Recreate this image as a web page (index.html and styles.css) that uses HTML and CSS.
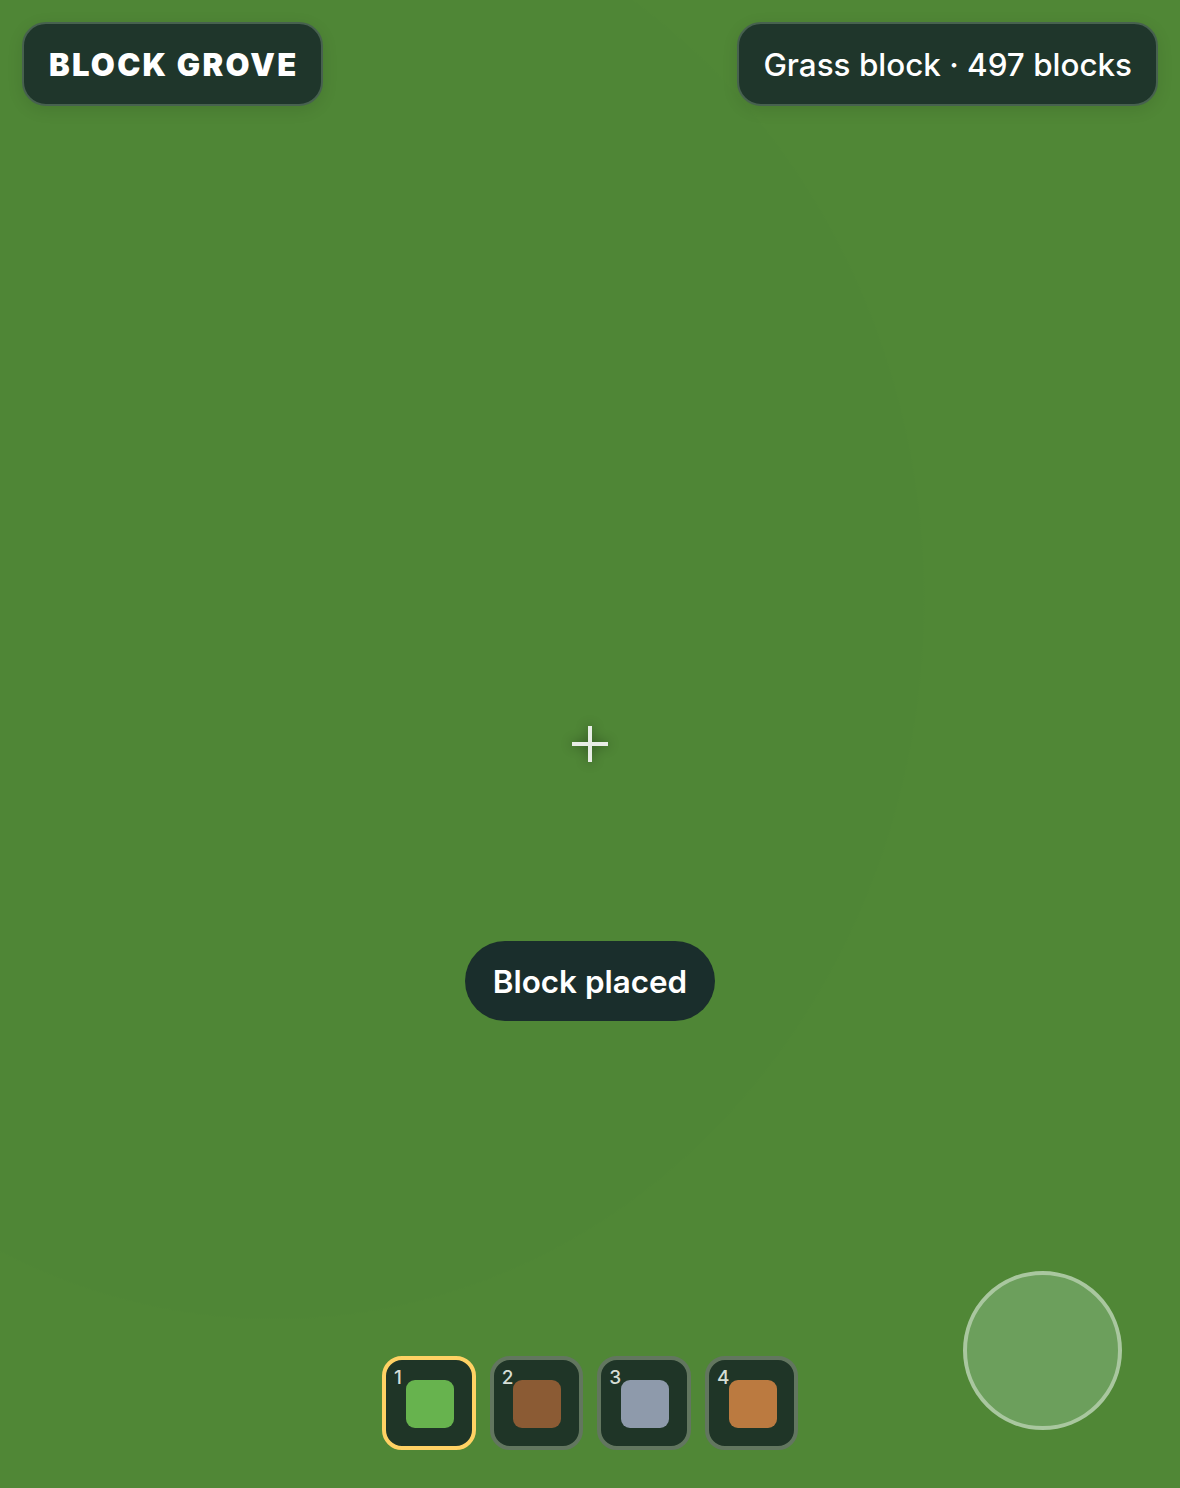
FILE: index.html
```html
<!DOCTYPE html>
<html lang="en">
<head>
<meta charset="utf-8">
<title>Block Grove</title>
<link rel="stylesheet" href="styles.css">
</head>
<body>
<main class="stage">
  <div class="scene"></div>
  <header class="top">
    <div class="panel title">BLOCK GROVE</div>
    <div class="panel status">Grass block · 497 blocks</div>
  </header>
  <div class="crosshair"></div>
  <div class="toast">Block placed</div>
  <nav class="hotbar">
    <div class="slot active"><span class="num">1</span><span class="swatch grass"></span></div>
    <div class="slot"><span class="num">2</span><span class="swatch dirt"></span></div>
    <div class="slot"><span class="num">3</span><span class="swatch stone"></span></div>
    <div class="slot"><span class="num">4</span><span class="swatch clay"></span></div>
  </nav>
  <div class="joystick"></div>
</main>
</body>
</html>
```
FILE: styles.css
```css
* { box-sizing: border-box; }
html, body { margin: 0; height: 100%; }
body { font-family: Inter, "Liberation Sans", sans-serif; color: #fff; }
.stage { position: relative; width: 1180px; height: 1488px; overflow: hidden; background: #508736; }
.scene { position: absolute; inset: 0; background: radial-gradient(650px 720px at 275px 600px, #4f8636 99.7%, #508736 100%); }
.top { position: relative; display: flex; justify-content: space-between; align-items: flex-start; padding: 22px; }
.panel { height: 84px; display: flex; align-items: center; padding: 0 24px; background: #1f362b; border: 2px solid #47614f; border-radius: 24px; box-shadow: 0 4px 16px rgba(0,0,0,.1); }
.title { font-size: 31px; font-weight: 900; letter-spacing: 2.25px; padding: 0 23px 0 25px; }
.status { font-size: 31.4px; font-weight: 500; padding-top: 1px; }
.crosshair { position: absolute; left: 572px; top: 726px; width: 36px; height: 36px; filter: drop-shadow(0 0 6px rgba(0,0,0,.45));
  background: linear-gradient(#e8ede6, #e8ede6) center / 36px 4px no-repeat, linear-gradient(#e8ede6, #e8ede6) center / 4px 36px no-repeat; }
.toast { position: absolute; left: 465px; top: 941px; width: 250px; height: 80px; padding-top: 1px; display: flex; align-items: center; justify-content: center; background: #1a2e2c; border-radius: 40px; font-size: 31.4px; font-weight: 600; }
.hotbar { position: absolute; left: 382px; top: 1356px; display: flex; gap: 14.17px; }
.slot { position: relative; width: 93.5px; height: 94px; background: #1f3527; border: 4px solid #62765f; border-radius: 20px; }
.slot.active { border-color: #ffd264; }
.num { position: absolute; left: 8px; top: 6px; font-size: 19px; font-weight: 500; line-height: 23px; color: #d6ded6; z-index: 1; }
.swatch { position: absolute; left: 19.6px; top: 20px; width: 48px; height: 48px; border-radius: 9px; }
.grass { background: #67b34e; }
.dirt { background: #8b5b34; }
.stone { background: #8e9aab; }
.clay { background: #bb7a40; }
.joystick { position: absolute; left: 963px; top: 1271px; width: 159px; height: 159px; border-radius: 50%; background: #6c9f5c; border: 4px solid #a9c79f; }
```
